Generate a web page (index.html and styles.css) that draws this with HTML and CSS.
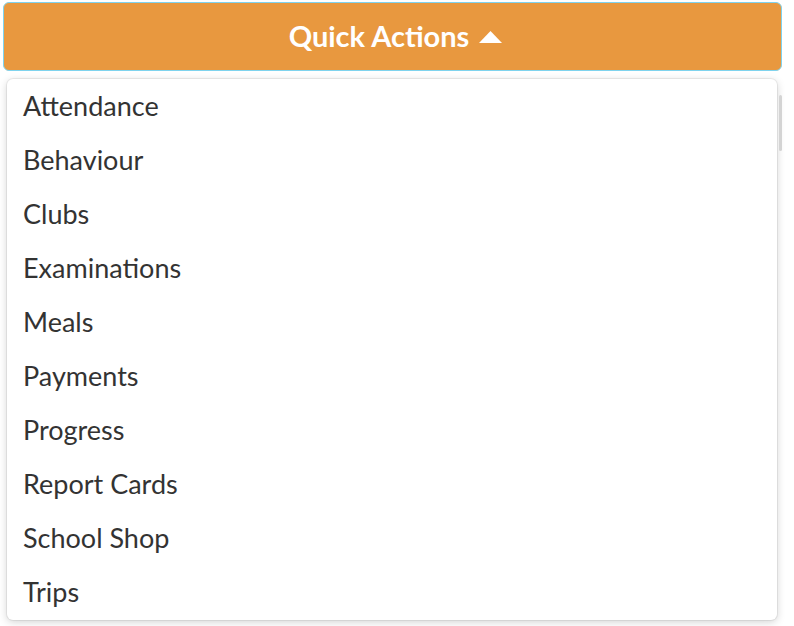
FILE: index.html
```html
<!DOCTYPE html>
<html>
<head>
<meta charset="utf-8">
<link rel="stylesheet" href="styles.css">
</head>
<body>
<div class="wrap">
  <button class="qa-btn">Quick Actions <svg class="caret" width="25" height="14" viewBox="0 0 25 14"><path d="M12.5 1 L24 13 L1 13 Z" fill="#fff"/></svg></button>
  <div class="menu-area">
    <ul class="menu">
      <li>Attendance</li>
      <li>Behaviour</li>
      <li>Clubs</li>
      <li>Examinations</li>
      <li>Meals</li>
      <li>Payments</li>
      <li>Progress</li>
      <li>Report Cards</li>
      <li>School Shop</li>
      <li>Trips</li>
    </ul>
    <div class="scroll"></div>
  </div>
</div>
</body>
</html>
```
FILE: styles.css
```css
html, body {
  margin: 0;
  padding: 0;
  background: #fff;
}
body {
  font-family: "Lato", "Open Sans", sans-serif;
  width: 794px;
  height: 626px;
  overflow: hidden;
}
.wrap {
  padding: 2px 0 0 3px;
  width: 779px;
}
.qa-btn {
  display: flex;
  align-items: center;
  justify-content: center;
  gap: 9px;
  width: 779px;
  height: 69px;
  margin: 0;
  background: #e8983f;
  border: 1.5px solid #7fd3ee;
  border-radius: 6px;
  color: #fff;
  font-family: inherit;
  font-weight: 700;
  font-size: 29px;
  padding: 0 0 2px 7px;
  box-sizing: border-box;
}
.caret {
  margin-top: 2px;
}
.menu-area {
  display: flex;
  margin-top: 8px;
}
.menu {
  list-style: none;
  margin: 0 0 0 4px;
  padding: 0;
  width: 772px;
  height: 541px;
  background: #fff;
  border-radius: 6px;
  box-shadow: 0 0 0 1px rgba(0,0,0,0.06), 0 2px 8px rgba(0,0,0,0.18);
  box-sizing: border-box;
}
.menu li {
  height: 54px;
  line-height: 54px;
  padding-left: 16px;
  font-size: 27px;
  color: #333;
}
.scroll {
  width: 3px;
  height: 56px;
  margin-top: 16px;
  margin-left: 2px;
  background: #d4d4d4;
  border-radius: 2px;
}
```
